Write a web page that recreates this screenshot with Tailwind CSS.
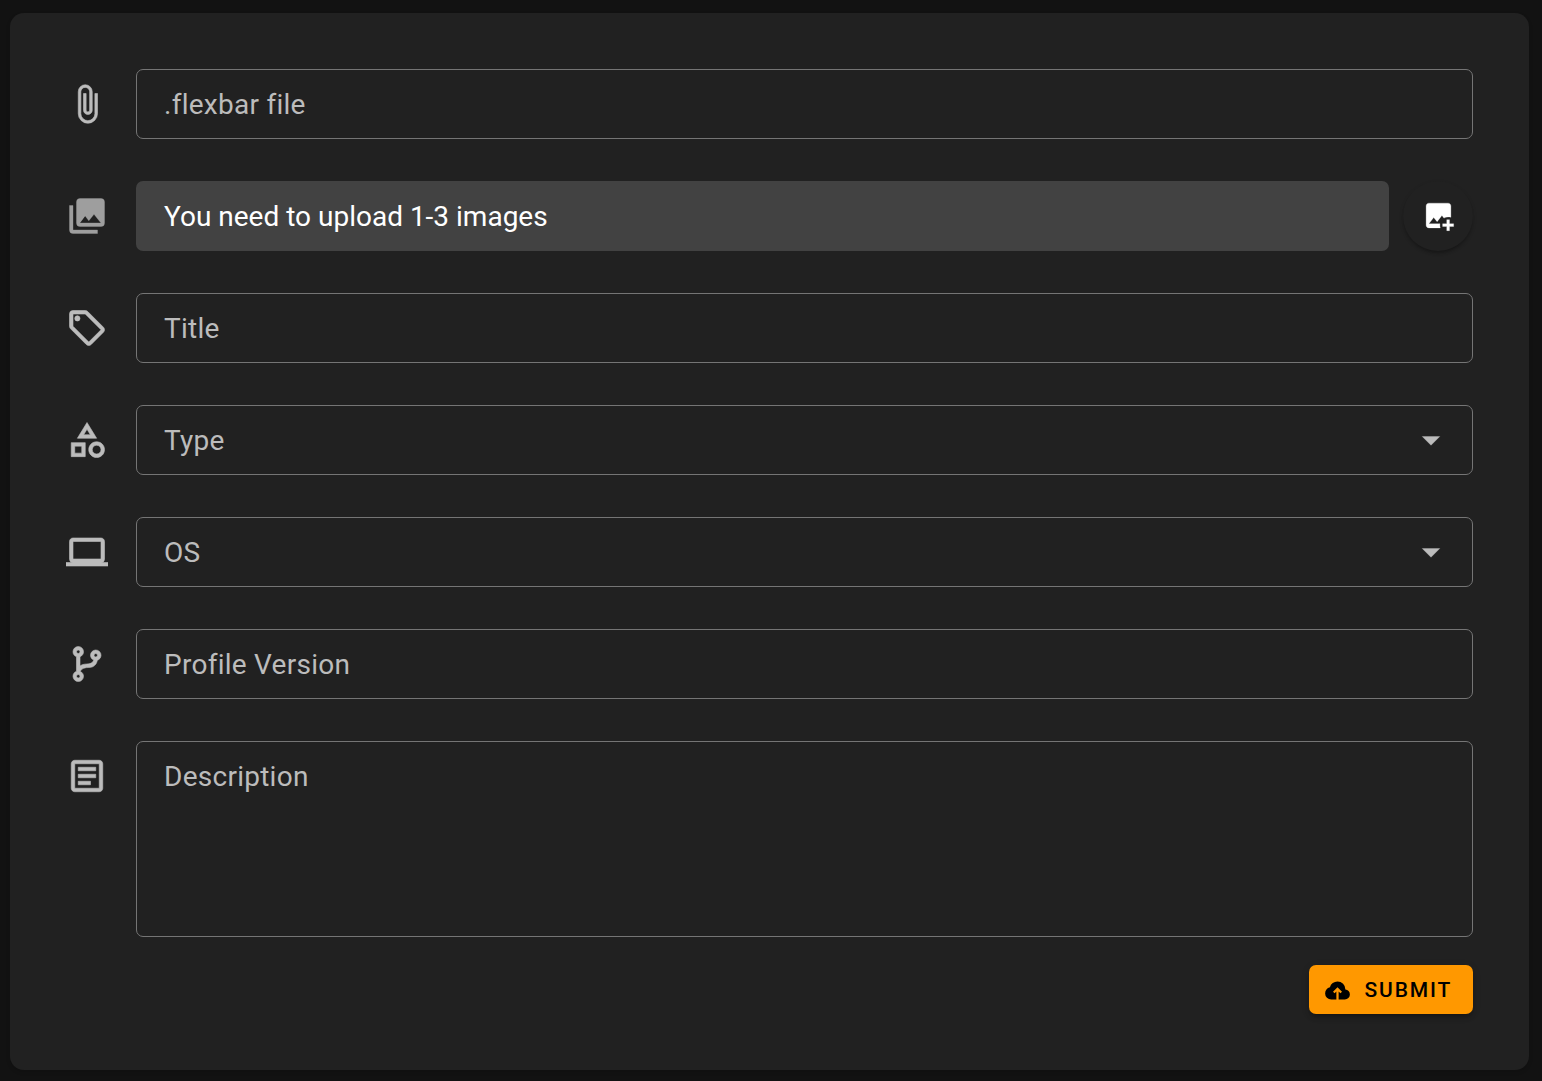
<!DOCTYPE html>
<html lang="en">
<head>
<meta charset="utf-8">
<title>Upload profile</title>
<script src="https://cdn.jsdelivr.net/npm/@tailwindcss/browser@4"></script>
</head>
<body class="min-h-screen bg-[#121212] pt-[13px] pr-[13px] pl-[10px] font-[Roboto,sans-serif] text-[28px] leading-[42px] tracking-[0.2625px] text-[#bcbcbc]">
<form class="flex h-[1057px] flex-col gap-[42px] rounded-[14px] bg-[#212121] p-14 shadow-[0_2px_4px_rgba(0,0,0,0.14)]">
  <div class="flex items-center gap-7">
    <svg class="size-[42px] shrink-0 stroke-current stroke-[0.35]" viewBox="0 0 24 24" fill="currentColor"><path d="M16.5,6V17.5A4,4 0 0,1 12.5,21.5A4,4 0 0,1 8.5,17.5V5A2.5,2.5 0 0,1 11,2.5A2.5,2.5 0 0,1 13.5,5V15.5A1,1 0 0,1 12.5,16.5A1,1 0 0,1 11.5,15.5V6H10V15.5A2.5,2.5 0 0,0 12.5,18A2.5,2.5 0 0,0 15,15.5V5A4,4 0 0,0 11,1A4,4 0 0,0 7,5V17.5A5.5,5.5 0 0,0 12.5,23A5.5,5.5 0 0,0 18,17.5V6H16.5Z"/></svg>
    <div class="flex h-[70px] flex-1 items-center rounded-[7px] border border-[#757575] px-[27px] pt-0.5">.flexbar file</div>
  </div>
  <div class="flex items-center">
    <svg class="mr-7 size-[42px] shrink-0 stroke-current stroke-[0.2] text-[#9e9e9e]" viewBox="0 0 24 24" fill="currentColor"><path d="M22,16V4A2,2 0 0,0 20,2H8A2,2 0 0,0 6,4V16A2,2 0 0,0 8,18H20A2,2 0 0,0 22,16M11,12L13.03,14.71L16,11L20,16H8M2,6V20A2,2 0 0,0 4,22H18V20H4V6Z"/></svg>
    <div class="flex h-[70px] flex-1 items-center rounded-[7px] bg-[#424242] px-7 pt-0.5 tracking-normal text-white">You need to upload 1-3 images</div>
    <button type="button" aria-label="Add image" class="ml-3.5 flex size-[70px] items-center justify-center rounded-full bg-[#212121] pb-px pl-[1.5px] text-white shadow-[0_3px_3px_-1px_rgba(0,0,0,0.2),0_2px_4px_rgba(0,0,0,0.14)]">
      <svg class="size-[33px]" viewBox="0 0 24 24" fill="currentColor"><path d="M18 15V18H15V20H18V23H20V20H23V18H20V15H18M13.3 21H5C3.9 21 3 20.1 3 19V5C3 3.9 3.9 3 5 3H19C20.1 3 21 3.9 21 5V13.3C20.4 13.1 19.7 13 19 13C17.9 13 16.8 13.3 15.9 13.9L14.5 12L11 16.5L8.5 13.5L5 18H13.1C13 18.3 13 18.7 13 19C13 19.7 13.1 20.4 13.3 21Z" stroke="currentColor" stroke-width="0.2"/></svg>
    </button>
  </div>
  <div class="flex items-center gap-7">
    <svg class="size-[42px] shrink-0 stroke-current stroke-[0.35]" viewBox="0 0 24 24" fill="currentColor"><path d="M21.41 11.58L12.41 2.58A2 2 0 0 0 11 2H4A2 2 0 0 0 2 4V11A2 2 0 0 0 2.59 12.42L11.59 21.42A2 2 0 0 0 13 22A2 2 0 0 0 14.41 21.41L21.41 14.41A2 2 0 0 0 22 13A2 2 0 0 0 21.41 11.58M13 20L4 11V4H11L20 13ZM6.5 5A1.5 1.5 0 1 1 5 6.5A1.5 1.5 0 0 1 6.5 5Z"/></svg>
    <div class="flex h-[70px] flex-1 items-center rounded-[7px] border border-[#757575] px-[27px] pt-0.5">Title</div>
  </div>
  <div class="flex items-center gap-7">
    <svg class="size-[42px] shrink-0 stroke-current stroke-[0.35]" viewBox="0 0 24 24" fill="currentColor"><path d="M11,13.5V21.5H3V13.5H11M9,15.5H5V19.5H9V15.5M12,2L17.5,11H6.5L12,2M12,5.86L10.08,9H13.92L12,5.86M17.5,13C20,13 22,15 22,17.5C22,20 20,22 17.5,22C15,22 13,20 13,17.5C13,15 15,13 17.5,13M17.5,15A2.5,2.5 0 0,0 15,17.5A2.5,2.5 0 0,0 17.5,20A2.5,2.5 0 0,0 20,17.5A2.5,2.5 0 0,0 17.5,15Z"/></svg>
    <div class="flex h-[70px] flex-1 items-center justify-between rounded-[7px] border border-[#757575] pr-5 pl-[27px]"><span class="pt-0.5">Type</span>
      <svg class="size-[42px] stroke-current stroke-[0.2]" viewBox="0 0 24 24" fill="currentColor"><path d="M7,10L12,15L17,10H7Z"/></svg>
    </div>
  </div>
  <div class="flex items-center gap-7">
    <svg class="size-[42px] shrink-0 stroke-current stroke-[0.35]" viewBox="0 0 24 24" fill="currentColor"><path d="M4,6H20V16H4ZM20,18A2,2 0 0,0 22,16V6C22,4.89 21.1,4 20,4H4C2.89,4 2,4.89 2,6V16A2,2 0 0,0 4,18H0V20H24V18H20Z"/></svg>
    <div class="flex h-[70px] flex-1 items-center justify-between rounded-[7px] border border-[#757575] pr-5 pl-[27px]"><span class="pt-0.5">OS</span>
      <svg class="size-[42px] stroke-current stroke-[0.2]" viewBox="0 0 24 24" fill="currentColor"><path d="M7,10L12,15L17,10H7Z"/></svg>
    </div>
  </div>
  <div class="flex items-center gap-7">
    <svg class="size-[42px] shrink-0 stroke-current stroke-[0.35]" viewBox="0 0 24 24" fill="currentColor"><path d="M13,14C9.64,14 8.54,15.35 8.18,16.24C9.25,16.7 10,17.76 10,19A3,3 0 0,1 7,22A3,3 0 0,1 4,19C4,17.69 4.83,16.58 6,16.17V7.83C4.83,7.42 4,6.31 4,5A3,3 0 0,1 7,2A3,3 0 0,1 10,5C10,6.31 9.17,7.42 8,7.83V13.12C8.88,12.47 10.16,12 12,12C14.67,12 15.56,10.66 15.85,9.77C14.77,9.32 14,8.25 14,7A3,3 0 0,1 17,4A3,3 0 0,1 20,7C20,8.34 19.12,9.5 17.91,9.86C17.65,11.29 16.68,14 13,14M7,18A1,1 0 0,0 6,19A1,1 0 0,0 7,20A1,1 0 0,0 8,19A1,1 0 0,0 7,18M7,4A1,1 0 0,0 6,5A1,1 0 0,0 7,6A1,1 0 0,0 8,5A1,1 0 0,0 7,4M17,6A1,1 0 0,0 16,7A1,1 0 0,0 17,8A1,1 0 0,0 18,7A1,1 0 0,0 17,6Z"/></svg>
    <div class="flex h-[70px] flex-1 items-center rounded-[7px] border border-[#757575] px-[27px] pt-0.5">Profile Version</div>
  </div>
  <div class="flex flex-col gap-7">
    <div class="flex gap-7">
      <svg class="mt-3.5 size-[42px] shrink-0 stroke-current stroke-[0.35]" viewBox="0 0 24 24" fill="currentColor"><path d="M5,3C3.89,3 3,3.89 3,5V19C3,20.11 3.89,21 5,21H19C20.11,21 21,20.11 21,19V5C21,3.89 20.11,3 19,3H5M5,5H19V19H5V5M7,7V9H17V7H7M7,11V13H17V11H7M7,15V17H14V15H7Z"/></svg>
      <div class="h-[196px] flex-1 rounded-[7px] border border-[#757575] px-[27px] py-[14px]">Description</div>
    </div>
    <button type="submit" class="flex h-[49px] w-[164px] items-center gap-3.5 self-end rounded-[7px] bg-[#ff9800] pt-px pl-[14.5px] text-[21px] leading-none font-medium tracking-[1.875px] text-black shadow-[0_5px_2px_-4px_rgba(0,0,0,0.2),0_4px_4px_rgba(0,0,0,0.14),0_2px_9px_rgba(0,0,0,0.12)]">
      <svg class="size-[27px]" viewBox="0 0 24 24" fill="currentColor"><path d="M11 20H6.5q-2.28 0-3.89-1.57Q1 16.85 1 14.58q0-1.95 1.17-3.48 1.18-1.53 3.08-1.95.63-2.3 2.5-3.72Q9.63 4 12 4q2.93 0 4.96 2.04Q19 8.07 19 11q1.73.2 2.86 1.5 1.14 1.28 1.14 3 0 1.88-1.31 3.19T18.5 20H13v-7.15l1.6 1.55L16 13l-4-4-4 4 1.4 1.4 1.6-1.55Z"/></svg>
      <span class="pt-px">SUBMIT</span>
    </button>
  </div>
</form>
</body>
</html>
